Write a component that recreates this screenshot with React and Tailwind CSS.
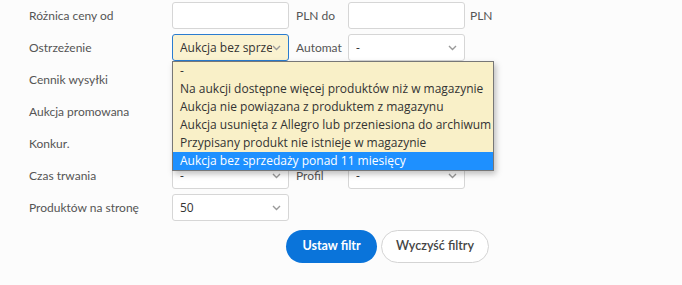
import React from "react";

const labelFont = { fontFamily: "Lato, 'Noto Sans', sans-serif" };

function Chevron({ className = "" }) {
  return (
    <svg width="9" height="6" viewBox="0 0 9 6" className={"shrink-0 " + className}>
      <path d="M1 1l3.5 3.5L8 1" fill="none" stroke="#9a9a9a" strokeWidth="1.4" />
    </svg>
  );
}

function Select({ value = "-", active = false }) {
  return (
    <div
      className={
        "w-[117px] h-[27px] rounded-[3px] border flex items-center pl-[7px] pr-[7px] text-[12px] text-[#333] font-['Open_Sans',sans-serif] " +
        (active ? "border-[#2a7cd0] bg-[#faf2d0]" : "border-[#d6d6d6] bg-white")
      }
    >
      <span className="flex-1 min-w-0 whitespace-nowrap overflow-hidden">{value}</span>
      <Chevron />
    </div>
  );
}

function Input() {
  return <div className="w-[117px] h-[27px] rounded-[3px] border border-[#d6d6d6] bg-white" />;
}

function Row({ label, children }) {
  return (
    <div className="flex items-center h-[27px]">
      <div className="w-[172px] pl-[29px] text-[12px] text-[#555]" style={labelFont}>
        {label}
      </div>
      {children}
    </div>
  );
}

function Mid({ text }) {
  return (
    <div className="w-[59px] pl-[7px] text-[12px] text-[#555]" style={labelFont}>
      {text}
    </div>
  );
}

const options = [
  "-",
  "Na aukcji dostępne więcej produktów niż w magazynie",
  "Aukcja nie powiązana z produktem z magazynu",
  "Aukcja usunięta z Allegro lub przeniesiona do archiwum",
  "Przypisany produkt nie istnieje w magazynie",
  "Aukcja bez sprzedaży ponad 11 miesięcy",
];

export default function App() {
  return (
    <div className="relative w-[682px] h-[285px] bg-[#fcfcfc] overflow-hidden">
      <div className="flex flex-col gap-[5px] pt-[2px]">
        <Row label="Różnica ceny od">
          <Input />
          <Mid text="PLN do" />
          <Input />
          <div className="pl-[5px] text-[12px] text-[#555]" style={labelFont}>PLN</div>
        </Row>
        <Row label="Ostrzeżenie">
          <Select value="Aukcja bez sprze" active />
          <Mid text="Automat" />
          <Select />
        </Row>
        <Row label="Cennik wysyłki">
          <Select value="" />
        </Row>
        <Row label="Aukcja promowana">
          <Select value="" />
        </Row>
        <Row label="Konkur.">
          <Select value="" />
        </Row>
        <Row label="Czas trwania">
          <Select />
          <Mid text="Profil" />
          <Select />
        </Row>
        <Row label="Produktów na stronę">
          <Select value="50" />
        </Row>
      </div>

      <div className="flex gap-[4px] pl-[286px] mt-[9px]" style={labelFont}>
        <button className="w-[91px] h-[33px] rounded-full bg-[#0a74da] text-white text-[12.5px] font-bold">
          Ustaw filtr
        </button>
        <button className="w-[108px] h-[33px] rounded-full bg-white border border-[#d4d4d4] text-[#444] text-[12.5px] font-semibold">
          Wyczyść filtry
        </button>
      </div>

      <div className="absolute left-[172px] top-[61px] w-[322px] border border-[#777] bg-[#f9f0c8] shadow-[2px_3px_6px_rgba(0,0,0,0.25)] font-['Open_Sans',sans-serif] text-[12px] text-[#333]">
        {options.map((o, i) => (
          <div
            key={i}
            className={
              "h-[18px] leading-[18px] pl-[7px] whitespace-nowrap " +
              (i === options.length - 1 ? "bg-[#1e90ff] text-white" : "")
            }
          >
            {o}
          </div>
        ))}
      </div>
    </div>
  );
}
